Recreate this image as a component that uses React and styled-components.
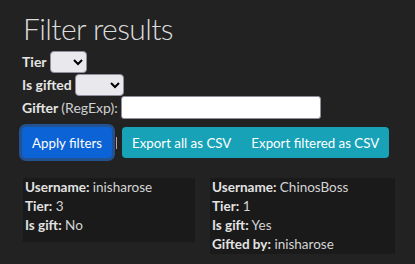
import React from "react";
import styled, { createGlobalStyle } from "styled-components";

const GlobalStyle = createGlobalStyle`
  body {
    margin: 0;
    background: #222222;
    color: #dee2e6;
    font-family: Lato, "Noto Sans", sans-serif;
  }
`;

const Page = styled.div`
  padding: 10px 20px 0 22px;
`;

const Title = styled.h1`
  margin: 0 0 4px 1px;
  font-family: Lato, sans-serif;
  font-weight: 300;
  font-size: 30px;
  letter-spacing: -0.6px;
  line-height: 36px;
  color: #dcdcdc;
`;

const Row = styled.div`
  display: flex;
  align-items: center;
  gap: 3px;
  height: 23px;
  font-size: 14px;
  white-space: nowrap;
`;

const Label = styled.label`
  font-weight: 700;
  color: #e4e4e4;
  span {
    font-weight: 400;
    color: #d0d0d0;
  }
`;

const Select = styled.select`
  width: ${(p) => p.$w}px;
  height: 22px;
  flex-shrink: 0;
  border: 1px solid #8f8f9d;
  border-radius: 4px;
  background: #e9e9ed;
`;

const Input = styled.input`
  width: 200px;
  height: 23px;
  flex-shrink: 0;
  box-sizing: border-box;
  border: 1px solid #8f8f9d;
  border-radius: 3px;
  background: #fff;
`;

const Actions = styled.div`
  display: flex;
  align-items: center;
  margin-top: 8px;
`;

const Button = styled.button`
  height: 31px;
  padding: 0 10px;
  flex-shrink: 0;
  white-space: nowrap;
  border: none;
  border-radius: ${(p) => p.$radius || "4px"};
  background: ${(p) => p.$bg};
  color: #fff;
  font-family: inherit;
  font-size: 13.3px;
  box-shadow: ${(p) => (p.$focus ? "0 0 0 3px #22528f" : "none")};
`;

const Sep = styled.span`
  width: 1px;
  height: 12px;
  margin: 0 5px 0 4px;
  background: #c89a9a;
`;

const Group = styled.div`
  display: flex;
`;

const Cards = styled.div`
  display: flex;
  align-items: flex-start;
  gap: 15px;
  margin: 20px 0 0 1px;
`;

const Card = styled.div`
  width: ${(p) => p.$w}px;
  padding: 0 2px ${(p) => p.$pb}px;
  background: #1a1a1a;
  font-size: 13.5px;
  line-height: 19px;
  color: #d4d4d4;
  white-space: nowrap;
  b {
    color: #e2e2e2;
  }
`;

const Line = styled.div``;

const results = [
  { user: "inisharose", tier: 3, gift: "No", w: 168, pb: 7 },
  { user: "ChinosBoss", tier: 1, gift: "Yes", by: "inisharose", w: 181, pb: 0 },
];

export default function App() {
  return (
    <Page>
      <GlobalStyle />
      <Title>Filter results</Title>
      <Row>
        <Label>Tier</Label>
        <Select $w={37} />
      </Row>
      <Row>
        <Label>Is gifted</Label>
        <Select $w={49} />
      </Row>
      <Row>
        <Label>
          Gifter <span>(RegExp):</span>
        </Label>
        <Input />
      </Row>
      <Actions>
        <Button $bg="#0b63d6" $focus>
          Apply filters
        </Button>
        <Sep />
        <Group>
          <Button $bg="#17a2b8" $radius="4px 0 0 4px">
            Export all as CSV
          </Button>
          <Button $bg="#17a2b8" $radius="0 4px 4px 0">
            Export filtered as CSV
          </Button>
        </Group>
      </Actions>
      <Cards>
        {results.map((r) => (
          <Card key={r.user} $w={r.w} $pb={r.pb}>
            <Line>
              <b>Username:</b> {r.user}
            </Line>
            <Line>
              <b>Tier:</b> {r.tier}
            </Line>
            <Line>
              <b>Is gift:</b> {r.gift}
            </Line>
            {r.by && (
              <Line>
                <b>Gifted by:</b> {r.by}
              </Line>
            )}
          </Card>
        ))}
      </Cards>
    </Page>
  );
}
